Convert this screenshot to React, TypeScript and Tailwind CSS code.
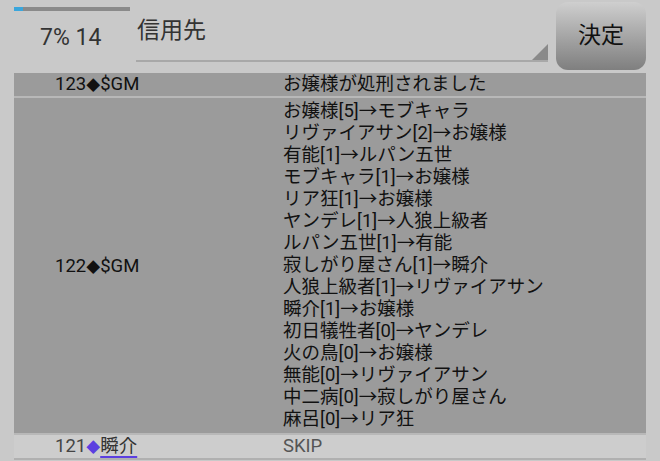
const font = { fontFamily: "Roboto, 'Noto Sans CJK JP', sans-serif" };

const votes = [
  "お嬢様[5]→モブキャラ",
  "リヴァイアサン[2]→お嬢様",
  "有能[1]→ルパン五世",
  "モブキャラ[1]→お嬢様",
  "リア狂[1]→お嬢様",
  "ヤンデレ[1]→人狼上級者",
  "ルパン五世[1]→有能",
  "寂しがり屋さん[1]→瞬介",
  "人狼上級者[1]→リヴァイアサン",
  "瞬介[1]→お嬢様",
  "初日犠牲者[0]→ヤンデレ",
  "火の鳥[0]→お嬢様",
  "無能[0]→リヴァイアサン",
  "中二病[0]→寂しがり屋さん",
  "麻呂[0]→リア狂",
];

function Diamond({ color }: { color: string }) {
  return <span className={`text-[14px] ${color}`}>◆</span>;
}

export default function App() {
  return (
    <div
      className="w-[660px] h-[461px] overflow-hidden bg-[#c9c9c9] text-[#111]"
      style={font}
    >
      <div className="flex h-[73px]">
        <div className="w-[136px] pl-[14px] pt-[7px]">
          <div className="w-[116px] h-[4px] bg-[#8a8a8a]">
            <div className="w-[9px] h-full bg-[#3aa6dc]" />
          </div>
          <div className="pl-[26px] pt-[13px] text-[23px] leading-[28px] text-[#333]">
            7% 14
          </div>
        </div>
        <div className="relative w-[412px] h-[62px] border-b-2 border-[#a8a8a8]">
          <div className="pt-[16px] pl-[1px] text-[23px] leading-[30px] text-[#333]">
            信用先
          </div>
          <div className="absolute right-0 bottom-0 w-0 h-0 border-l-[16px] border-l-transparent border-b-[16px] border-b-[#8a8a8a]" />
        </div>
        <div className="ml-[8px] mt-[2px] w-[90px] h-[68px] rounded-[12px] bg-gradient-to-b from-[#cfcfcf] to-[#7f7f7f] flex items-center justify-center text-[23px] text-[#111]">
          決定
        </div>
      </div>

      <div className="mx-[14px] text-[18.5px]">
        <div className="flex bg-[#9b9b9b] h-[25px] items-center border-b-2 border-[#b8b8b8]">
          <div className="w-[269px] pl-[41px]">
            123<Diamond color="text-[#111]" />$GM
          </div>
          <div>お嬢様が処刑されました</div>
        </div>
        <div className="flex bg-[#9b9b9b] items-center pt-[2px] pb-[3px] border-b-2 border-[#b8b8b8]">
          <div className="w-[269px] pl-[41px] pt-[4px]">
            122<Diamond color="text-[#111]" />$GM
          </div>
          <div className="leading-[22px]">
            {votes.map((v) => (
              <div key={v}>{v}</div>
            ))}
          </div>
        </div>
        <div className="flex bg-[#cdcdcd] h-[25px] items-center border-b-2 border-[#b0b0b0]">
          <div className="w-[269px] pl-[41px] text-[#444]">
            121<Diamond color="text-[#5b3fe0]" />
            <span className="text-[#333] underline decoration-[#5b3fe0] decoration-2 underline-offset-4">
              瞬介
            </span>
          </div>
          <div className="text-[#555]">SKIP</div>
        </div>
      </div>
    </div>
  );
}
